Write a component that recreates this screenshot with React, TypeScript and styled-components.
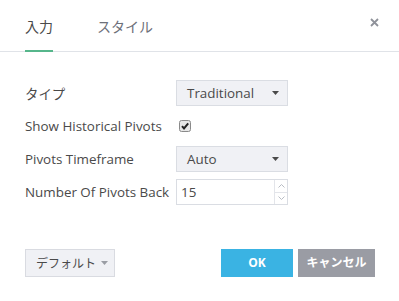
import styled, { createGlobalStyle } from "styled-components";
import { useState } from "react";

const GlobalStyle = createGlobalStyle`
    html, body {
        margin: 0;
        padding: 0;
        background: #ffffff;
    }
    body {
        font-family: "Open Sans", "Noto Sans CJK JP", sans-serif;
        color: #4a4a4a;
    }
`

const rows = [
    { label: "タイプ", kind: "select", value: "Traditional" },
    { label: "Show Historical Pivots", kind: "check", value: "" },
    { label: "Pivots Timeframe", kind: "select", value: "Auto" },
    { label: "Number Of Pivots Back", kind: "number", value: "15" },
]

const Caret = (props: { color?: string }) => (
    <svg width="7" height="4" viewBox="0 0 7 4">
        <path d="M0 0 L7 0 L3.5 4 Z" fill={props.color || "#4a4a4a"} />
    </svg>
)

const App = () => {
    const [tab, setTab] = useState<number>(0);
    const [checked, setChecked] = useState<boolean>(true);

    return (
        <Dialog>
            <GlobalStyle />
            <Header>
                <Tab active={tab === 0} onClick={() => setTab(0)}>入力</Tab>
                <Tab active={tab === 1} onClick={() => setTab(1)}>スタイル</Tab>
                <Close>
                    <svg width="9" height="9" viewBox="0 0 9 9">
                        <path d="M1 1 L8 8 M8 1 L1 8" stroke="#8f929a" strokeWidth="1.8" />
                    </svg>
                </Close>
            </Header>
            <Body>
                {rows.map(row => (
                    <Row key={row.label}>
                        <Label>{row.label}</Label>
                        {row.kind === "select" && (
                            <Select>
                                <span>{row.value}</span>
                                <Caret />
                            </Select>
                        )}
                        {row.kind === "check" && (
                            <CheckBox onClick={() => setChecked(!checked)}>
                                <svg width="12" height="12" viewBox="0 0 12 12">
                                    <rect x="0.5" y="0.5" width="11" height="11" rx="2" fill="#e6e6e6" stroke="#8a8a8a" />
                                    {checked && <path d="M3 6.2 L5 8.4 L9.2 3.4" stroke="#222" strokeWidth="2" fill="none" />}
                                </svg>
                            </CheckBox>
                        )}
                        {row.kind === "number" && (
                            <NumberBox>
                                <span>{row.value}</span>
                                <Spinner>
                                    <SpinBtn>
                                        <svg width="7" height="4" viewBox="0 0 7 4">
                                            <path d="M0.5 3.5 L3.5 0.5 L6.5 3.5" stroke="#b8bcc4" fill="none" />
                                        </svg>
                                    </SpinBtn>
                                    <SpinBtn>
                                        <svg width="7" height="4" viewBox="0 0 7 4">
                                            <path d="M0.5 0.5 L3.5 3.5 L6.5 0.5" stroke="#b8bcc4" fill="none" />
                                        </svg>
                                    </SpinBtn>
                                </Spinner>
                            </NumberBox>
                        )}
                    </Row>
                ))}
            </Body>
            <Footer>
                <DefaultButton>
                    デフォルト
                    <Caret color="#9a9da4" />
                </DefaultButton>
                <Actions>
                    <ActionButton variant="ok">OK</ActionButton>
                    <ActionButton variant="cancel">キャンセル</ActionButton>
                </Actions>
            </Footer>
        </Dialog>
    );
}

const Dialog = styled.div`
    width: 399px;
    height: 301px;
    display: flex;
    flex-direction: column;
    background: #ffffff;
`
const Header = styled.div`
    display: flex;
    align-items: stretch;
    height: 51px;
    padding: 0 20px 0 25px;
    border-bottom: 1px solid #e0e3e8;
    box-sizing: content-box;
`
const Tab = styled.div<{ active: boolean }>`
    display: flex;
    align-items: center;
    margin-right: 44px;
    font-size: 14px;
    color: ${p => (p.active ? "#4a4a4a" : "#6d7079")};
    border-bottom: 2px solid ${p => (p.active ? "#56b68b" : "transparent")};
    margin-bottom: -1px;
    padding-top: 1px;
    cursor: pointer;
`
const Close = styled.div`
    margin-left: auto;
    display: flex;
    align-items: flex-start;
    padding-top: 18px;
    cursor: pointer;
`
const Body = styled.div`
    display: flex;
    flex-direction: column;
    gap: 7px;
    padding: 28px 25px 0;
`
const Row = styled.div`
    display: flex;
    align-items: center;
    height: 26px;
`
const Label = styled.div`
    width: 151px;
    font-size: 13.4px;
    color: #4a4a4a;
`
const Select = styled.div`
    width: 112px;
    height: 26px;
    box-sizing: border-box;
    display: flex;
    align-items: center;
    justify-content: space-between;
    padding: 0 8px 0 10px;
    background: #f0f1f5;
    border: 1px solid #dadde3;
    font-size: 13.4px;
    color: #4a4a4a;
`
const CheckBox = styled.div`
    display: flex;
    padding-left: 3px;
    cursor: pointer;
`
const NumberBox = styled.div`
    width: 112px;
    height: 26px;
    box-sizing: border-box;
    display: flex;
    align-items: center;
    border: 1px solid #dadde3;
    font-size: 13.4px;
    color: #4a4a4a;
    span{
        flex: 1;
        padding-left: 4px;
    }
`
const Spinner = styled.div`
    width: 12px;
    height: 100%;
    display: flex;
    flex-direction: column;
    border-left: 1px solid #e3e5ea;
`
const SpinBtn = styled.div`
    flex: 1;
    display: flex;
    align-items: center;
    justify-content: center;
    & + &{
        border-top: 1px solid #e3e5ea;
    }
`
const Footer = styled.div`
    display: flex;
    justify-content: space-between;
    align-items: center;
    margin-top: auto;
    padding: 0 24px 24px 25px;
`
const DefaultButton = styled.div`
    width: 90px;
    height: 28px;
    box-sizing: border-box;
    display: flex;
    align-items: center;
    justify-content: space-between;
    padding: 0 6px 0 10px;
    background: #f0f1f5;
    border: 1px solid #d9dbe1;
    font-size: 12px;
    color: #4a4a4a;
`
const Actions = styled.div`
    display: flex;
    gap: 5px;
`
const ActionButton = styled.div<{ variant: "ok" | "cancel" }>`
    height: 28px;
    width: ${p => (p.variant === "ok" ? "72px" : "77px")};
    display: flex;
    align-items: center;
    justify-content: center;
    font-size: 12px;
    font-weight: 700;
    color: #ffffff;
    background: ${p => (p.variant === "ok" ? "#3ab3e3" : "#9a9ca4")};
    padding-bottom: 2px;
    box-sizing: border-box;
    cursor: pointer;
`

export default App;
